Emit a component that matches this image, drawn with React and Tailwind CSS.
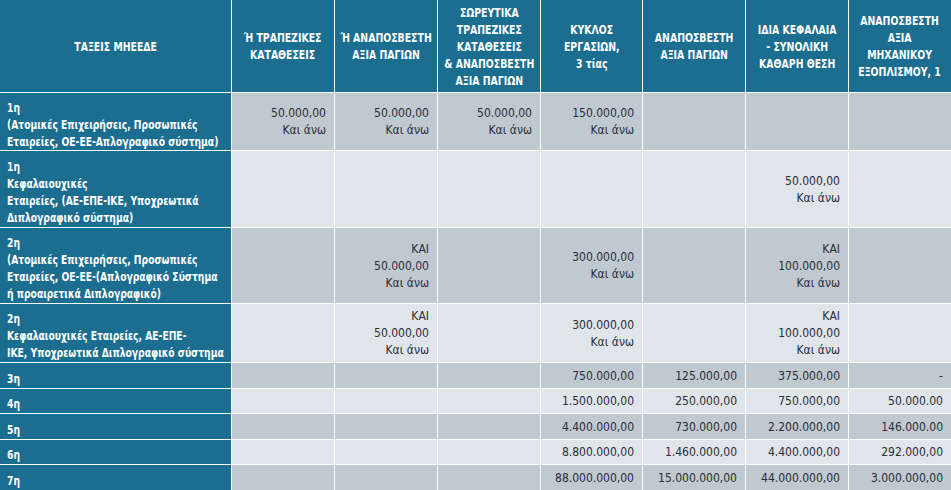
import React from "react";

const head = [
  ["ΤΑΞΕΙΣ ΜΗΕΕΔΕ"],
  ["Ή ΤΡΑΠΕΖΙΚΕΣ", "ΚΑΤΑΘΕΣΕΙΣ"],
  ["Ή ΑΝΑΠΟΣΒΕΣΤΗ", "ΑΞΙΑ ΠΑΓΙΩΝ"],
  ["ΣΩΡΕΥΤΙΚΑ", "ΤΡΑΠΕΖΙΚΕΣ", "ΚΑΤΑΘΕΣΕΙΣ", "& ΑΝΑΠΟΣΒΕΣΤΗ", "ΑΞΙΑ ΠΑΓΙΩΝ"],
  ["ΚΥΚΛΟΣ", "ΕΡΓΑΣΙΩΝ,", "3 τίας"],
  ["ΑΝΑΠΟΣΒΕΣΤΗ", "ΑΞΙΑ ΠΑΓΙΩΝ"],
  ["ΙΔΙΑ ΚΕΦΑΛΑΙΑ", "- ΣΥΝΟΛΙΚΗ", "ΚΑΘΑΡΗ ΘΕΣΗ"],
  ["ΑΝΑΠΟΣΒΕΣΤΗ", "ΑΞΙΑ", "ΜΗΧΑΝΙΚΟΥ", "ΕΞΟΠΛΙΣΜΟΥ, 1"],
];

const ka = ["Και άνω"];
const rows = [
  {
    label: ["1η", "(Ατομικές Επιχειρήσεις, Προσωπικές", "Εταιρείες, ΟΕ-ΕΕ-Απλογραφικό σύστημα)"],
    cells: [["50.000,00", ...ka], ["50.000,00", ...ka], ["50.000,00", ...ka], ["150.000,00", ...ka], [], [], []],
  },
  {
    label: ["1η", "Κεφαλαιουχικές", "Εταιρείες, (ΑΕ-ΕΠΕ-ΙΚΕ, Υποχρεωτικά", "Διπλογραφικό σύστημα)"],
    cells: [[], [], [], [], [], ["50.000,00", ...ka], []],
  },
  {
    label: ["2η", "(Ατομικές Επιχειρήσεις, Προσωπικές", "Εταιρείες, ΟΕ-ΕΕ-(Απλογραφικό Σύστημα", "ή προαιρετικά Διπλογραφικό)"],
    cells: [[], ["ΚΑΙ", "50.000,00", ...ka], [], ["300.000,00", ...ka], [], ["ΚΑΙ", "100.000,00", ...ka], []],
  },
  {
    label: ["2η", "Κεφαλαιουχικές Εταιρείες, ΑΕ-ΕΠΕ-", "ΙΚΕ, Υποχρεωτικά Διπλογραφικό σύστημα"],
    cells: [[], ["ΚΑΙ", "50.000,00", ...ka], [], ["300.000,00", ...ka], [], ["ΚΑΙ", "100.000,00", ...ka], []],
  },
  { label: ["3η"], cells: [[], [], [], ["750.000,00"], ["125.000,00"], ["375.000,00"], ["-"]] },
  { label: ["4η"], cells: [[], [], [], ["1.500.000,00"], ["250.000,00"], ["750.000,00"], ["50.000.00"]] },
  { label: ["5η"], cells: [[], [], [], ["4.400.000,00"], ["730.000,00"], ["2.200.000,00"], ["146.000.00"]] },
  { label: ["6η"], cells: [[], [], [], ["8.800.000,00"], ["1.460.000,00"], ["4.400.000,00"], ["292.000,00"]] },
  { label: ["7η"], cells: [[], [], [], ["88.000.000,00"], ["15.000.000,00"], ["44.000.000,00"], ["3.000.000,00"]] },
];

function Lines({ lines }) {
  return lines.map((l, i) => <div key={i}>{l}</div>);
}

export default function App() {
  return (
    <div className="w-[951px] h-[490px] overflow-hidden bg-white font-['DejaVu_Sans_Condensed',sans-serif]">
      <div className="grid grid-cols-[231px_102px_102px_102px_101px_102px_102px_102px] grid-rows-[92px_57px_76px_75px_58px_25px_24px_25px_24px_25px] gap-px bg-white">
        {head.map((h, i) => (
          <div
            key={"h" + i}
            className="bg-[#1c6e91] text-white font-bold text-[13px] leading-[17px] flex items-center justify-center text-center whitespace-nowrap overflow-hidden"
          >
            <div className="scale-x-[0.8] shrink-0">
              <Lines lines={h} />
            </div>
          </div>
        ))}
        {rows.map((r, ri) => {
          const bg = ri % 2 === 0 ? "bg-[#bfc9cf]" : "bg-[#e0e5e9]";
          return (
            <React.Fragment key={"r" + ri}>
              <div className="bg-[#1c6e91] text-white font-bold text-[13px] leading-[17px] flex items-center pl-[7px] pt-[5px] whitespace-nowrap overflow-hidden">
                <div className="scale-x-[0.785] origin-left shrink-0">
                  <Lines lines={r.label} />
                </div>
              </div>
              {r.cells.map((c, ci) => (
                <div
                  key={ci}
                  className={`${bg} text-[#2a2d3a] text-[12px] leading-[17px] flex flex-col items-end justify-center pr-[8px] pt-[1px] whitespace-nowrap`}
                >
                  <Lines lines={c} />
                </div>
              ))}
            </React.Fragment>
          );
        })}
      </div>
    </div>
  );
}
